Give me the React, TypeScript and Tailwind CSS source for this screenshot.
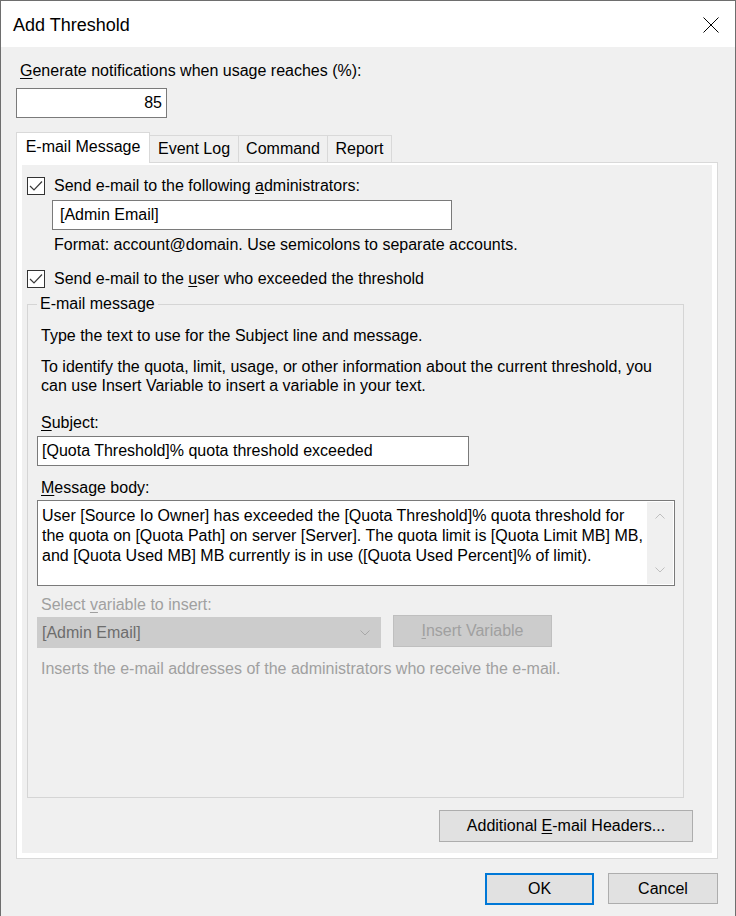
import { ReactNode } from "react";

function CheckBox() {
  return (
    <div className="w-[18px] h-[18px] border border-[#333333] bg-white flex items-center justify-center shrink-0">
      <svg width="16" height="16" viewBox="0 0 16 16" fill="none">
        <polyline points="2,8 6,12 14,3.5" stroke="#3a3a3a" strokeWidth="1.2" />
      </svg>
    </div>
  );
}

function WinButton({ children, className = "" }: { children: ReactNode; className?: string }) {
  return (
    <div
      className={`bg-[#e1e1e1] border border-[#adadad] flex items-center justify-center text-black ${className}`}
    >
      {children}
    </div>
  );
}

function TextBox({ children, className = "" }: { children?: ReactNode; className?: string }) {
  return (
    <div className={`bg-white border border-[#7a7a7a] flex items-center ${className}`}>{children}</div>
  );
}

export default function App() {
  return (
    <div className="w-[736px] h-[916px] bg-[#f0f0f0] border-x border-t border-[#6e6e6e] flex flex-col overflow-hidden font-['Liberation_Sans',Arial,sans-serif] text-[16px] text-black">
      {/* title bar */}
      <div className="h-[46px] bg-white flex items-center justify-between pl-[12px] pr-[16px] shrink-0">
        <span className="text-[18px] leading-[24px] mt-[2px]">Add Threshold</span>
        <svg width="16" height="16" viewBox="0 0 16 16" className="mt-[1px]">
          <path d="M0.5 0.5 L15.5 15.5 M15.5 0.5 L0.5 15.5" stroke="#000" strokeWidth="1" />
        </svg>
      </div>

      <div className="flex flex-col pl-[15px] pr-[16px]">
        <div className="mt-[14px] ml-[4px] leading-[20px]">
          <u className="underline-offset-2">G</u>enerate notifications when usage reaches (%):
        </div>
        <TextBox className="mt-[7px] w-[151px] h-[30px] justify-end pr-[4px]">85</TextBox>

        {/* tabs */}
        <div className="mt-[14px] h-[30px] flex items-end relative z-10">
          <div className="w-[134px] h-[31px] bg-white border-x border-t border-[#d9d9d9] flex items-center justify-center mb-[-1px] pb-[3px]">
            E-mail Message
          </div>
          <div className="w-[89px] h-[27px] border-t border-r border-[#d9d9d9] flex items-center justify-center">
            Event Log
          </div>
          <div className="w-[89px] h-[27px] border-t border-r border-[#d9d9d9] flex items-center justify-center">
            Command
          </div>
          <div className="w-[64px] h-[27px] border-t border-r border-[#d9d9d9] flex items-center justify-center">
            Report
          </div>
        </div>

        {/* tab page */}
        <div className="w-[702px] border border-[#d9d9d9] bg-white pt-[2px] px-[5px] pb-[5px]">
          <div className="bg-[#f0f0f0] flex flex-col h-[688px]">
            <div className="mt-[12px] ml-[5px] flex items-center h-[18px]">
              <CheckBox />
              <span className="ml-[9px] leading-[18px]">
                Send e-mail to the following <u className="underline-offset-2">a</u>dministrators:
              </span>
            </div>
            <TextBox className="mt-[5px] ml-[30px] w-[400px] h-[30px] pl-[7px]">[Admin Email]</TextBox>
            <div className="mt-[5px] ml-[32px] leading-[20px]">
              Format: account@domain. Use semicolons to separate accounts.
            </div>
            <div className="mt-[15px] ml-[5px] flex items-center h-[18px]">
              <CheckBox />
              <span className="ml-[9px] leading-[18px]">
                Send e-mail to the <u className="underline-offset-2">u</u>ser who exceeded the threshold
              </span>
            </div>

            {/* group box */}
            <div className="relative mt-[16px] ml-[5px] w-[657px] h-[494px] border border-[#d5d5d5] flex flex-col pl-[9px]">
              <span className="absolute left-[9px] top-[-11px] px-[3px] bg-[#f0f0f0] leading-[20px]">
                E-mail message
              </span>
              <div className="mt-[21px] ml-[4px] leading-[20px]">
                Type the text to use for the Subject line and message.
              </div>
              <div className="mt-[11px] ml-[4px] leading-[19px]">
                To identify the quota, limit, usage, or other information about the current threshold, you
                <br />
                can use Insert Variable to insert a variable in your text.
              </div>
              <div className="mt-[18px] ml-[4px] leading-[20px]">
                <u className="underline-offset-2">S</u>ubject:
              </div>
              <TextBox className="mt-[3px] w-[432px] h-[30px] pl-[4px]">
                [Quota Threshold]% quota threshold exceeded
              </TextBox>
              <div className="mt-[12px] ml-[4px] leading-[20px]">
                <u className="underline-offset-2">M</u>essage body:
              </div>
              <div className="mt-[2px] w-[638px] h-[86px] bg-white border border-[#7a7a7a] flex">
                <div className="flex-1 pl-[4px] pt-[5px] leading-[20px] whitespace-nowrap">
                  User [Source Io Owner] has exceeded the [Quota Threshold]% quota threshold for
                  <br />
                  the quota on [Quota Path] on server [Server]. The quota limit is [Quota Limit MB] MB,
                  <br />
                  and [Quota Used MB] MB currently is in use ([Quota Used Percent]% of limit).
                </div>
                <div className="w-[26px] my-[1px] mr-[1px] bg-[#f0f0f0] flex flex-col items-center justify-between py-[11px]">
                  <svg width="10" height="6" viewBox="0 0 10 6">
                    <polyline points="0.5,5.5 5,1 9.5,5.5" fill="none" stroke="#bfbfbf" strokeWidth="1" />
                  </svg>
                  <svg width="10" height="6" viewBox="0 0 10 6">
                    <polyline points="0.5,0.5 5,5 9.5,0.5" fill="none" stroke="#bfbfbf" strokeWidth="1" />
                  </svg>
                </div>
              </div>
              <div className="mt-[9px] ml-[4px] leading-[20px] text-[#a0a0a0]">
                Select <u className="underline-offset-2">v</u>ariable to insert:
              </div>
              <div className="flex items-start">
                <div className="mt-[2px] w-[344px] h-[31px] bg-[#cccccc] border border-[#cccccc] flex items-center justify-between pl-[4px] pr-[10px] text-[#6d6d6d]">
                  <span>[Admin Email]</span>
                  <svg width="10" height="6" viewBox="0 0 10 6">
                    <polyline points="0.5,0.5 5,5 9.5,0.5" fill="none" stroke="#a8a8a8" strokeWidth="1" />
                  </svg>
                </div>
                <div className="ml-[12px] w-[159px] h-[32px] bg-[#cccccc] border border-[#bfbfbf] flex items-center justify-center text-[#a0a0a0]">
                  <span>
                    <u className="underline-offset-2">I</u>nsert Variable
                  </span>
                </div>
              </div>
              <div className="mt-[11px] ml-[4px] leading-[20px] text-[#a0a0a0]">
                Inserts the e-mail addresses of the administrators who receive the e-mail.
              </div>
            </div>

            <div className="flex justify-end mt-[12px] mr-[19px]">
              <WinButton className="w-[254px] h-[32px]">
                <span>
                  Additional <u className="underline-offset-2">E</u>-mail Headers...
                </span>
              </WinButton>
            </div>
          </div>
        </div>

        {/* dialog buttons */}
        <div className="flex justify-end mt-[14px] mr-[1px] gap-[14px]">
          <div className="w-[109px] h-[32px] bg-[#e1e1e1] border-2 border-[#0078d7] flex items-center justify-center">
            OK
          </div>
          <WinButton className="w-[110px] h-[31px]">Cancel</WinButton>
        </div>
      </div>
    </div>
  );
}
